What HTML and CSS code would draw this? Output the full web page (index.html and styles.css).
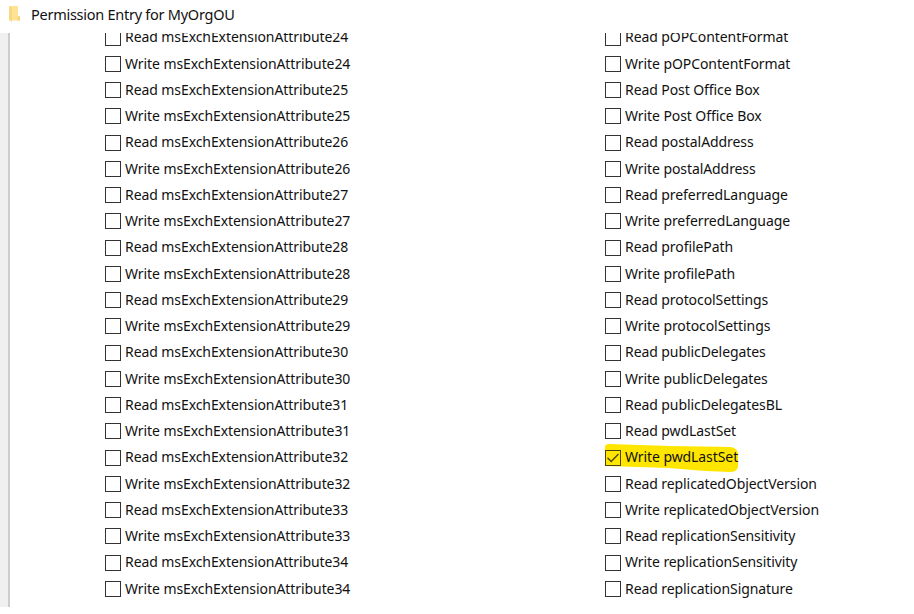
FILE: index.html
```
<!DOCTYPE html>
<html lang="en">
<head>
<meta charset="utf-8">
<title>Permission Entry for MyOrgOU</title>
<link rel="stylesheet" href="styles.css">
</head>
<body>
<div class="window">
<header class="titlebar">
<svg class="folder" width="14" height="18" viewBox="0 0 14 18"><path d="M1 1h9v9.500l2 1.500v3.500H4.500L1 14z" fill="#ffe292"/><path d="M1 1l3 2V17L1 15z" fill="#f8d880"/><path d="M10 10.500l2 1.300V15.500H9.500z" fill="#f6d478"/></svg>
<h1>Permission Entry for MyOrgOU</h1>
</header>
<main class="panel">
<ul class="list">
<li><i></i><span>Read msExchExtensionAttribute24</span></li>
<li><i></i><span>Write msExchExtensionAttribute24</span></li>
<li><i></i><span>Read msExchExtensionAttribute25</span></li>
<li><i></i><span>Write msExchExtensionAttribute25</span></li>
<li><i></i><span>Read msExchExtensionAttribute26</span></li>
<li><i></i><span>Write msExchExtensionAttribute26</span></li>
<li><i></i><span>Read msExchExtensionAttribute27</span></li>
<li><i></i><span>Write msExchExtensionAttribute27</span></li>
<li><i></i><span>Read msExchExtensionAttribute28</span></li>
<li><i></i><span>Write msExchExtensionAttribute28</span></li>
<li><i></i><span>Read msExchExtensionAttribute29</span></li>
<li><i></i><span>Write msExchExtensionAttribute29</span></li>
<li><i></i><span>Read msExchExtensionAttribute30</span></li>
<li><i></i><span>Write msExchExtensionAttribute30</span></li>
<li><i></i><span>Read msExchExtensionAttribute31</span></li>
<li><i></i><span>Write msExchExtensionAttribute31</span></li>
<li><i></i><span>Read msExchExtensionAttribute32</span></li>
<li><i></i><span>Write msExchExtensionAttribute32</span></li>
<li><i></i><span>Read msExchExtensionAttribute33</span></li>
<li><i></i><span>Write msExchExtensionAttribute33</span></li>
<li><i></i><span>Read msExchExtensionAttribute34</span></li>
<li><i></i><span>Write msExchExtensionAttribute34</span></li>
</ul>
<ul class="list">
<li><i></i><span>Read pOPContentFormat</span></li>
<li><i></i><span>Write pOPContentFormat</span></li>
<li><i></i><span>Read Post Office Box</span></li>
<li><i></i><span>Write Post Office Box</span></li>
<li><i></i><span>Read postalAddress</span></li>
<li><i></i><span>Write postalAddress</span></li>
<li><i></i><span>Read preferredLanguage</span></li>
<li><i></i><span>Write preferredLanguage</span></li>
<li><i></i><span>Read profilePath</span></li>
<li><i></i><span>Write profilePath</span></li>
<li><i></i><span>Read protocolSettings</span></li>
<li><i></i><span>Write protocolSettings</span></li>
<li><i></i><span>Read publicDelegates</span></li>
<li><i></i><span>Write publicDelegates</span></li>
<li><i></i><span>Read publicDelegatesBL</span></li>
<li><i></i><span>Read pwdLastSet</span></li>
<li class="marked"><svg class="highlight" width="136" height="32" viewBox="0 0 136 32"><path d="M1 4Q1 1 5 1L66 3 127 4Q134 5 134 12V24Q133 29 126 29L101 28 65 25 1 23z" fill="#ffe600"/></svg><i><svg width="14" height="14" viewBox="0 0 14 14"><path d="M1.500 6.700L5.200 10.500 12.500 3" fill="none" stroke="#4a4410" stroke-width="1.300"/></svg></i><span>Write pwdLastSet</span></li>
<li><i></i><span>Read replicatedObjectVersion</span></li>
<li><i></i><span>Write replicatedObjectVersion</span></li>
<li><i></i><span>Read replicationSensitivity</span></li>
<li><i></i><span>Write replicationSensitivity</span></li>
<li><i></i><span>Read replicationSignature</span></li>
</ul>
</main>
</div>
</body>
</html>
```
FILE: styles.css
```
* { box-sizing: border-box; }
body { margin: 0; background: #fff; color: #111; font-family: "Noto Sans", "Open Sans", sans-serif; font-size: 14px; }
.window { width: 914px; height: 607px; display: flex; flex-direction: column; overflow: hidden; }
.titlebar { height: 33px; flex: none; display: flex; align-items: flex-start; padding: 5px 0 0 8px; gap: 9px; }
.folder { flex: none; }
h1 { margin: 0; font-size: 14.5px; font-weight: 400; line-height: 19px; letter-spacing: -0.26px; }
.panel { flex: 1; min-height: 0; overflow: hidden; border-left: 8px solid #f0f0f0; box-shadow: inset 2px 0 #cdcdcd; display: grid; grid-template-columns: 500px 1fr; padding-left: 97px; }
.list { list-style: none; margin: -8.4px 0 0; padding: 0; }
.list li { position: relative; height: 26.25px; display: flex; align-items: center; gap: 4px; white-space: nowrap; }
.list i { flex: none; width: 16px; height: 16px; border: 1px solid #333; background: #fff; }
.list i svg { display: block; }
.list span { line-height: 18px; letter-spacing: -0.08px; position: relative; top: -0.3px; }
.list .marked i { position: relative; background: transparent; border-color: #4a4410; }
.highlight { position: absolute; left: -1px; top: -2px; }
```
